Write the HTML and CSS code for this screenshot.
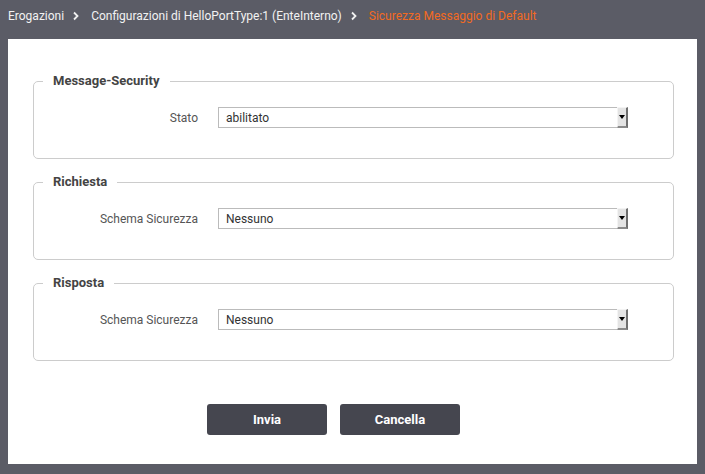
FILE: index.html
```html
<!DOCTYPE html>
<html lang="it">
<head>
<meta charset="utf-8">
<title>Sicurezza Messaggio di Default</title>
<link rel="stylesheet" href="styles.css">
</head>
<body>
<nav class="crumbs">
  <span class="crumb">Erogazioni</span>
  <svg class="chev" viewBox="0 0 8 10" width="8" height="10"><path d="M2 1.5 L5.5 5 L2 8.5" fill="none" stroke="#f0f0f0" stroke-width="1.8"/></svg>
  <span class="crumb">Configurazioni di HelloPortType:1 (EnteInterno)</span>
  <svg class="chev" viewBox="0 0 8 10" width="8" height="10"><path d="M2 1.5 L5.5 5 L2 8.5" fill="none" stroke="#f0f0f0" stroke-width="1.8"/></svg>
  <span class="crumb current">Sicurezza Messaggio di Default</span>
</nav>
<main class="panel">
  <form class="form">
    <fieldset class="group">
      <legend>Message-Security</legend>
      <div class="row">
        <label class="lbl">Stato</label>
        <span class="sel"><select><option>abilitato</option></select><span class="arrow"></span></span>
      </div>
    </fieldset>
    <fieldset class="group">
      <legend>Richiesta</legend>
      <div class="row">
        <label class="lbl">Schema Sicurezza</label>
        <span class="sel"><select><option>Nessuno</option></select><span class="arrow"></span></span>
      </div>
    </fieldset>
    <fieldset class="group">
      <legend>Risposta</legend>
      <div class="row">
        <label class="lbl">Schema Sicurezza</label>
        <span class="sel"><select><option>Nessuno</option></select><span class="arrow"></span></span>
      </div>
    </fieldset>
    <div class="actions">
      <button type="button" class="btn">Invia</button>
      <button type="button" class="btn">Cancella</button>
    </div>
  </form>
</main>
</body>
</html>
```
FILE: styles.css
```css
* { box-sizing: border-box; }
html, body { margin: 0; padding: 0; }
body {
  background: #5b5c66;
  font-family: Roboto, "Liberation Sans", sans-serif;
  font-size: 13px;
  width: 705px;
  height: 474px;
  overflow: hidden;
}
.crumbs {
  display: flex;
  align-items: center;
  height: 31px;
  padding: 0 0 0 8px;
}
.crumb {
  color: #f2f2f2;
  font-size: 12px;
  line-height: 16px;
}
.chev { margin: 0 11px 0 8px; }
.crumb.current { color: #f26a22; }
.panel {
  background: #ffffff;
  margin: 8px 8px 0 8px;
  height: 425px;
  padding: 34px 0 0 25px;
}
.form { display: flex; flex-direction: column; }
.group {
  width: 641px;
  margin: 0 0 15px 0;
  border: 1px solid #cccccc;
  border-radius: 5px;
  padding: 18px 9px 30px 9px;
  min-width: 0;
}
.group legend {
  padding: 0 10px;
  font-weight: bold;
  color: #444444;
  font-size: 13px;
  line-height: 16px;
}
.row {
  display: flex;
  align-items: center;
}
.lbl {
  width: 155px;
  text-align: right;
  color: #555555;
  font-size: 12px;
  margin-right: 20px;
}
.sel {
  position: relative;
  display: block;
  width: 410px;
  height: 21px;
}
.sel select {
  appearance: none;
  -webkit-appearance: none;
  width: 100%;
  height: 21px;
  border: 1px solid #bbbbbb;
  border-radius: 0;
  background: #ffffff;
  font-family: Roboto, "Liberation Sans", sans-serif;
  font-size: 12px;
  color: #333333;
  padding: 0 0 0 7px;
  margin: 0;
}
.arrow {
  position: absolute;
  right: 0;
  top: 0;
  width: 11px;
  height: 21px;
  background: #e4e4e4;
  border-top: 1px solid #f4f4f4;
  border-left: 1px solid #f4f4f4;
  border-right: 2px solid #6f6f6f;
  border-bottom: 2px solid #8a8a8a;
}
.arrow::after {
  content: "";
  position: absolute;
  left: 1px;
  top: 7px;
  border-left: 3px solid transparent;
  border-right: 3px solid transparent;
  border-top: 4px solid #000000;
}
.actions {
  display: flex;
  gap: 13px;
  margin: 28px 0 0 174px;
}
.btn {
  width: 120px;
  height: 31px;
  border: none;
  border-radius: 3px;
  background: #45464f;
  color: #ffffff;
  font-family: Roboto, "Liberation Sans", sans-serif;
  font-weight: bold;
  font-size: 13px;
  padding: 0;
}
```
